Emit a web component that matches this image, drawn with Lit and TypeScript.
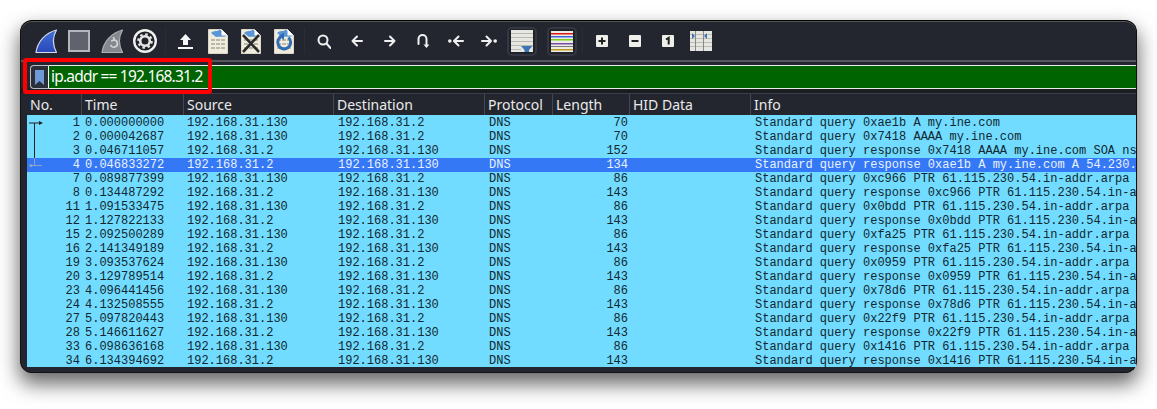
import { LitElement, html, css, svg } from "lit";
import { customElement } from "lit/decorators.js";

const A = "192.168.31.130";
const B = "192.168.31.2";
type R = [number, string, string, string, number, string, boolean?];
const rows: R[] = [
  [1, "0.000000000", A, B, 70, "Standard query 0xae1b A my.ine.com"],
  [2, "0.000042687", A, B, 70, "Standard query 0x7418 AAAA my.ine.com"],
  [3, "0.046711057", B, A, 152, "Standard query response 0x7418 AAAA my.ine.com SOA ns-1000.awsdns"],
  [4, "0.046833272", B, A, 134, "Standard query response 0xae1b A my.ine.com A 54.230.115.61", true],
  [7, "0.089877399", A, B, 86, "Standard query 0xc966 PTR 61.115.230.54.in-addr.arpa"],
  [8, "0.134487292", B, A, 143, "Standard query response 0xc966 PTR 61.115.230.54.in-addr.arpa"],
  [11, "1.091533475", A, B, 86, "Standard query 0x0bdd PTR 61.115.230.54.in-addr.arpa"],
  [12, "1.127822133", B, A, 143, "Standard query response 0x0bdd PTR 61.115.230.54.in-addr.arpa"],
  [15, "2.092500289", A, B, 86, "Standard query 0xfa25 PTR 61.115.230.54.in-addr.arpa"],
  [16, "2.141349189", B, A, 143, "Standard query response 0xfa25 PTR 61.115.230.54.in-addr.arpa"],
  [19, "3.093537624", A, B, 86, "Standard query 0x0959 PTR 61.115.230.54.in-addr.arpa"],
  [20, "3.129789514", B, A, 143, "Standard query response 0x0959 PTR 61.115.230.54.in-addr.arpa"],
  [23, "4.096441456", A, B, 86, "Standard query 0x78d6 PTR 61.115.230.54.in-addr.arpa"],
  [24, "4.132508555", B, A, 143, "Standard query response 0x78d6 PTR 61.115.230.54.in-addr.arpa"],
  [27, "5.097820443", A, B, 86, "Standard query 0x22f9 PTR 61.115.230.54.in-addr.arpa"],
  [28, "5.146611627", B, A, 143, "Standard query response 0x22f9 PTR 61.115.230.54.in-addr.arpa"],
  [33, "6.098636168", A, B, 86, "Standard query 0x1416 PTR 61.115.230.54.in-addr.arpa"],
  [34, "6.134394692", B, A, 143, "Standard query response 0x1416 PTR 61.115.230.54.in-addr.arpa"],
];
const heads = ["No.", "Time", "Source", "Destination", "Protocol", "Length", "HID Data", "Info"];

const i = (w: number, h: number, body: unknown) =>
  html`<svg width=${w} height=${h} viewBox="0 0 ${w} ${h}">${body}</svg>`;

const sheet = (extra: unknown) => svg`
  <path d="M.5 .5H13.5L19.5 6.5V24.5H.5Z" fill="#f1edde" stroke="#dbd7c8"/>
  <path d="M3 4C6 1 9 3 12 .5L19 7C15 8.5 11 7 8 8Z" fill="#5a95d6"/>
  <path d="M13.5 .5V6.5H19.5Z" fill="#fdfdfb"/>
  ${extra}`;
const binary = svg`<g fill="#bdb9aa">
  <rect x="3" y="10" width="4" height="2"/><rect x="8" y="10" width="4" height="2"/><rect x="13" y="10" width="4" height="2"/>
  <rect x="3" y="14" width="4" height="2"/><rect x="8" y="14" width="4" height="2"/><rect x="13" y="14" width="4" height="2"/>
  <rect x="3" y="18" width="4" height="2"/><rect x="8" y="18" width="4" height="2"/><rect x="13" y="18" width="4" height="2"/></g>`;

const finPath = "M1 23.5C2.5 13 10 4 21.5 1C17.5 8 17.5 16 21.5 23.5Z";

const stroke = (d: string) =>
  svg`<path d=${d} fill="none" stroke="#f0f0f0" stroke-width="2" stroke-linecap="round" stroke-linejoin="round"/>`;

const tool = (w: number, h: number, body: unknown) =>
  html`<span class="t" style="width:${w}px">${i(w, h, body)}</span>`;
const sp = (w: number) => html`<span class="sp" style="width:${w}px"></span>`;
const sep = html`<span class="sep"></span>`;

const page = svg`<rect width="22" height="22" fill="#e8e8e2"/><path d="M0 3.5H22M0 7.5H22M0 11.5H22M0 15.5H22M0 19.5H22" stroke="#b9b9b2"/>`;

@customElement("app-root")
export class AppRoot extends LitElement {
  static styles = css`
    :host { display: block; width: 1157px; height: 409px; background: #fff; padding: 20px 20px 36px; box-sizing: border-box; overflow: hidden; }
    .win { position: relative; height: 353px; box-sizing: border-box; background: #23262e; border: 1px solid #111; border-top-color: #000; border-radius: 12px; box-shadow: 0 10px 20px 1px rgba(0,0,0,.6), inset 0 1px 0 #555; display: flex; flex-direction: column; padding: 0 0 5px 6px; }
    .tools { height: 38px; flex: none; margin-top: 1px; margin-left: 8px; display: flex; align-items: center; }
    .t { flex: none; display: flex; align-items: center; justify-content: center; }
    .framed { box-sizing: border-box; width: 30px; height: 29px; border: 2px solid #343741; border-radius: 5px; background: #1f2228; }
    .rule { height: 2px; background: #56585e; flex: none; margin-left: -6px; }
    .filter { flex: none; display: flex; height: 24px; margin: 3px 0 0 3px; }
    .mark { width: 19px; box-sizing: border-box; background: #2b2f3a; border: 1px solid #b9bcc2; border-right: 1px solid #fff; border-radius: 4px 0 0 4px; display: flex; align-items: center; justify-content: center; flex: none; }
    .input { flex: 1; background: #006400; border-top: 1px solid #e8eee8; border-bottom: 1px solid #e8eee8; color: #fff; font: 15.5px/21px "Noto Sans", sans-serif; letter-spacing: -.8px; padding-left: 2px; white-space: nowrap; }
    .gap { height: 4px; flex: none; background: #1b1d23; margin-left: -6px; }
    .grid { display: grid; grid-template-columns: 54px 102px 150px 151px 68px 77px 121px 1fr; flex: none; }
    .head { height: 22px; align-items: stretch; border-top: 1px solid #3b3e46; box-sizing: border-box; }
    .h { color: #eaeaea; font: 14px/21px "Noto Sans", sans-serif; padding-left: 3px; border-left: 1px solid #44474f; white-space: nowrap; box-sizing: border-box; }
    .h:first-child { border-left: 0; }
    .list { flex: 1; overflow: hidden; background: #71dcff; position: relative; padding-top: 1px; }
    .row { height: 14px; font: 12px/14px "Liberation Mono", monospace; color: #12272f; white-space: pre; }
    .row.sel { background: #3478f6; color: #e9f2ff; }
    .row > span { overflow: hidden; padding-left: 4px; box-sizing: border-box; }
    .row > .r { text-align: right; padding: 0 1px 0 0; }
    .row > .p5 { padding-left: 5px; }
    .rel { position: absolute; left: 1px; top: 0; pointer-events: none; }
    .box { position: absolute; left: 2px; top: 37px; width: 189px; height: 36px; box-sizing: border-box; border: 4px solid #f00; border-radius: 3px; pointer-events: none; }
    .sp { flex: none; }
    .sep { flex: none; width: 1px; height: 26px; background: #2a2d35; }
  `;

  render() {
    return html`<div class="win">
      <div class="tools">
        ${tool(22, 24, svg`<defs><linearGradient id="b" x1="0" y1="0" x2="0" y2="1"><stop offset="0" stop-color="#3f6fd8"/><stop offset="1" stop-color="#2a48b8"/></linearGradient></defs><path d=${finPath} fill="url(#b)" stroke="#d5dbea" stroke-width="1.2" stroke-linejoin="round"/>`)}
        ${sp(11)}
        ${tool(22, 22, svg`<rect x="1" y="1" width="20" height="20" fill="#60636e" stroke="#b4b6bc" stroke-width="2"/>`)}
        ${sp(11)}
        ${tool(23, 24, svg`<path d=${finPath} fill="#85888f" stroke="#aeb0b5" stroke-width="1.2" stroke-linejoin="round"/><path d="M9.5 16a3.6 3.6 0 1 0 3.5-5M12.5 8L13.2 11L10.2 12" fill="none" stroke="#d5d6da" stroke-width="1.6"/>`)}
        ${sp(9)}
        ${tool(24, 24, svg`<circle cx="12" cy="12" r="10.8" fill="#1f2228" stroke="#f0f0f0" stroke-width="2.4"/><circle cx="12" cy="12" r="4.8" fill="none" stroke="#e8e8e8" stroke-width="2.6"/><circle cx="12" cy="12" r="6.8" fill="none" stroke="#e8e8e8" stroke-width="2" stroke-dasharray="2.6 2.74"/>`)}
        ${sp(8)}${sep}${sp(12)}
        ${tool(15, 15, svg`<path d="M7.5 0L13 6H10V11H5V6H2Z M0 13H15V15H0Z" fill="#f6f6f6"/>`)}
        ${sp(15)}
        ${tool(20, 25, sheet(binary))}
        ${sp(13)}
        ${tool(20, 25, sheet(svg`${binary}<path d="M2 6L18 23M18 6L2 23" stroke="#2a2a2a" stroke-width="2.6"/>`))}
        ${sp(13)}
        ${tool(20, 25, sheet(svg`${binary}<path d="M14.5 8.5a6.5 6.5 0 1 1-6-1.4" fill="none" stroke="#2f6db5" stroke-width="3"/><path d="M10 3.5V11L4.5 7Z" fill="#2f6db5"/>`))}
        ${sp(10)}${sep}${sp(12)}
        ${tool(14, 15, svg`<circle cx="6" cy="6" r="4.5" fill="none" stroke="#f0f0f0" stroke-width="2"/><path d="M9.5 9.5L13.5 14" stroke="#f0f0f0" stroke-width="2" stroke-linecap="round"/>`)}
        ${sp(20)}
        ${tool(12, 12, stroke("M11 6H1.5M6 1.5L1.5 6L6 10.5"))}
        ${sp(21)}
        ${tool(12, 12, stroke("M1 6H10.5M6 1.5L10.5 6L6 10.5"))}
        ${sp(21)}
        ${tool(12, 14, svg`${stroke("M1.5 10V5a4 4 0 0 1 8 0V12")}<path d="M6.5 10.5H12.5L9.5 14Z" fill="#f0f0f0"/>`)}
        ${sp(19)}
        ${tool(16, 12, svg`<circle cx="1.8" cy="6" r="1.8" fill="#f0f0f0"/>${stroke("M15 6H6.5M10.5 1.5L6 6L10.5 10.5")}`)}
        ${sp(17)}
        ${tool(16, 12, svg`<circle cx="14.2" cy="6" r="1.8" fill="#f0f0f0"/>${stroke("M1 6H9.5M5.5 1.5L10 6L5.5 10.5")}`)}
        ${sp(10)}
        <span class="t framed">${i(22, 22, svg`${page}<path d="M10 22L10 16H21.5V22Z" fill="#e8e8e2"/><path d="M10 16H21.5L18 20V22H13.5V20Z" fill="#3c74b8"/>`)}</span>
        ${sp(10)}
        <span class="t framed">${i(22, 21, svg`<rect width="22" height="21" fill="#ecece6"/><rect y="2" width="22" height="1.5" fill="#e01515"/><rect y="5" width="22" height="1.5" fill="#3f66d8"/><rect y="8" width="22" height="1.5" fill="#7ccf1e"/><rect y="12" width="22" height="1.5" fill="#7a4aa8"/><rect y="15" width="22" height="1" fill="#777"/><rect y="18" width="22" height="1.5" fill="#c29a20"/>`)}</span>
        ${sp(5)}${sep}${sp(13)}
        ${tool(12, 12, svg`<rect width="12" height="12" rx="1" fill="#eeeeea"/><path d="M2.5 6H9.5M6 2.5V9.5" stroke="#222" stroke-width="2"/>`)}
        ${sp(21)}
        ${tool(12, 12, svg`<rect width="12" height="12" rx="1" fill="#eeeeea"/><path d="M2.5 6H9.5" stroke="#222" stroke-width="2"/>`)}
        ${sp(21)}
        ${tool(12, 12, svg`<rect width="12" height="12" rx="1" fill="#eeeeea"/><path d="M4 4.5L6.7 2.8V9.5" fill="none" stroke="#222" stroke-width="2"/>`)}
        ${sp(16)}
        ${tool(22, 20, svg`<rect width="22" height="20" fill="#e6e6e0"/><path d="M0 3.5H22M0 7.5H22M0 11.5H22M0 15.5H22" stroke="#bdbdb6"/><path d="M5.5 0V20M13.5 0V20" stroke="#888"/><path d="M2 2L5 5L2 8ZM17 2L14 5L17 8Z" fill="#3c74b8"/>`)}
      </div>
      <div class="rule"></div>
      <div class="filter">
        <div class="mark">${i(9, 15, svg`<path d="M0 0H9V15L4.5 11L0 15Z" fill="#6f9ad6"/>`)}</div>
        <div class="input">ip.addr == 192.168.31.2</div>
      </div>
      <div class="gap"></div>
      <div class="grid head">${heads.map((h) => html`<div class="h">${h}</div>`)}</div>
      <div class="list">
        ${rows.map(
          ([n, t, s, d, l, info, sel]) => html`<div class="grid row ${sel ? "sel" : ""}">
            <span class="r">${n}</span><span>${t}</span><span>${s}</span><span class="p5">${d}</span><span class="p5">DNS</span><span class="r">${l}</span><span></span><span class="p5">${info}</span>
          </div>`
        )}
        <svg class="rel" width="16" height="56" viewBox="0 0 16 56">
          <path d="M1 8H13M6.5 8V50" stroke="#222" fill="none"/><path d="M15 8L11 6V10Z" fill="#222"/>
          <path d="M3 50.5H14M6.5 43V50" stroke="#8da3c9" fill="none"/>
          <circle cx="3" cy="50.5" r="1.6" fill="#8da3c9"/>
        </svg>
      </div>
      <div class="box"></div>
    </div>`;
  }
}
